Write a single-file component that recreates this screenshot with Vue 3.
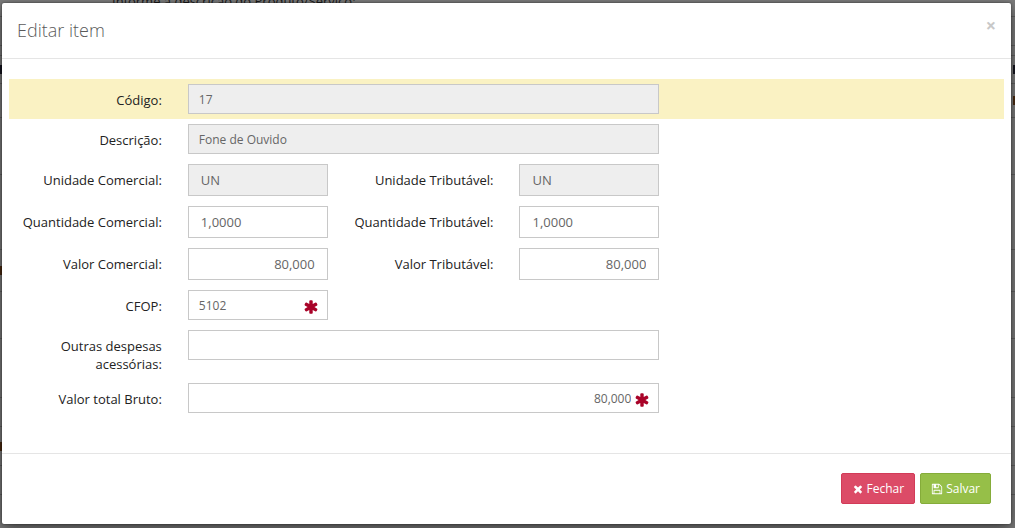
<script setup>
import { reactive } from 'vue'

const rows = reactive([
  { highlight: true, fields: [{ id: 'codigo', label: 'Código:', value: '17', readonly: true, wide: true }] },
  { fields: [{ id: 'descricao', label: 'Descrição:', value: 'Fone de Ouvido', readonly: true, wide: true }] },
  {
    fields: [
      { id: 'un-comercial', label: 'Unidade Comercial:', value: 'UN', readonly: true, large: true },
      { id: 'un-tributavel', label: 'Unidade Tributável:', value: 'UN', readonly: true, large: true },
    ],
  },
  {
    fields: [
      { id: 'qt-comercial', label: 'Quantidade Comercial:', value: '1,0000', large: true },
      { id: 'qt-tributavel', label: 'Quantidade Tributável:', value: '1,0000', large: true },
    ],
  },
  {
    fields: [
      { id: 'vl-comercial', label: 'Valor Comercial:', value: '80,000', large: true, right: true },
      { id: 'vl-tributavel', label: 'Valor Tributável:', value: '80,000', large: true, right: true },
    ],
  },
  { fields: [{ id: 'cfop', label: 'CFOP:', value: '5102', required: true }] },
  { fields: [{ id: 'despesas', label: 'Outras despesas acessórias:', value: '', wide: true, wrap: true }] },
  { fields: [{ id: 'bruto', label: 'Valor total Bruto:', value: '80,000', wide: true, right: true, required: true }] },
])

const pageRows = [
  { height: 17 },
  { height: 29 },
  { height: 10 },
  { height: 28, left: 'ink', right: 'ink' },
  { height: 34, right: 'rust' },
  { height: 57 },
  { height: 75 },
  { height: 42, left: 'rust' },
  { height: 47 },
  { height: 59 },
  { height: 29 },
  { height: 39, left: 'rust' },
  { height: 29 },
]
</script>

<template>
  <div class="screen">
    <div class="page" aria-hidden="true">
      <p class="page-label">Informe a descrição do Produto/Serviço:</p>
      <div class="page-rows">
        <div v-for="(r, i) in pageRows" :key="i" class="page-row" :style="{ height: r.height + 'px' }">
          <span class="mark" :class="r.left"></span>
          <span class="mark" :class="r.right"></span>
        </div>
      </div>
    </div>

    <section class="modal" role="dialog" aria-labelledby="modal-title">
      <header class="modal-header">
        <h1 id="modal-title">Editar item</h1>
        <button type="button" class="close" aria-label="Fechar janela">×</button>
      </header>

      <form id="item-form" class="modal-body" @submit.prevent>
        <div v-for="(row, i) in rows" :key="i" class="row" :class="{ highlight: row.highlight }">
          <template v-for="f in row.fields" :key="f.id">
            <label :for="f.id" :class="{ wrap: f.wrap }">{{ f.label }}</label>
            <div class="control" :class="{ wide: f.wide }">
              <input
                :id="f.id"
                v-model="f.value"
                type="text"
                :readonly="f.readonly"
                :required="f.required"
                :class="{ large: f.large, right: f.right, required: f.required }"
              />
              <svg v-if="f.required" class="asterisk" viewBox="0 0 1792 1792" aria-hidden="true">
                <path d="M1546 1050q46 26 59.500 77.500t-12.500 97.500l-64 110q-26 46-77.500 59.500t-97.500-12.500l-266-153v307q0 52-38 90t-90 38h-128q-52 0-90-38t-38-90v-307l-266 153q-46 26-97.500 12.500t-77.500-59.500l-64-110q-26-46-12.500-97.500t59.500-77.500l266-154-266-154q-46-26-59.500-77.500t12.500-97.500l64-110q26-46 77.500-59.500t97.500 12.500l266 153v-307q0-52 38-90t90-38h128q52 0 90 38t38 90v307l266-153q46-26 97.500-12.500t77.500 59.500l64 110q26 46 12.500 97.500t-59.500 77.500l-266 154z" />
              </svg>
            </div>
          </template>
        </div>
      </form>

      <footer class="modal-footer">
        <button type="button" class="btn danger">
          <svg viewBox="0 0 1792 1792" aria-hidden="true">
            <path d="M1490 1322q0 40-28 68l-136 136q-28 28-68 28t-68-28l-294-294-294 294q-28 28-68 28t-68-28l-136-136q-28-28-28-68t28-68l294-294-294-294q-28-28-28-68t28-68l136-136q28-28 68-28t68 28l294 294 294-294q28-28 68-28t68 28l136 136q28 28 28 68t-28 68l-294 294 294 294q28 28 28 68z" />
          </svg>
          <span>Fechar</span>
        </button>
        <button type="submit" form="item-form" class="btn success">
          <svg viewBox="0 0 1792 1792" aria-hidden="true">
            <path d="M512 1536h768v-384h-768v384zm896 0h128v-896q0-14-10-38.500t-20-34.500l-281-281q-10-10-34-20t-39-10v416q0 40-28 68t-68 28h-576q-40 0-68-28t-28-68v-416h-128v1280h128v-416q0-40 28-68t68-28h832q40 0 68 28t28 68v416zm-384-928v-320q0-13-9.500-22.500t-22.500-9.500h-192q-13 0-22.500 9.500t-9.500 22.500v320q0 13 9.500 22.500t22.500 9.500h192q13 0 22.500-9.500t9.500-22.500zm640 32v928q0 40-28 68t-68 28h-1344q-40 0-68-28t-28-68v-1344q0-40 28-68t68-28h928q40 0 88 20t76 48l280 280q28 28 48 76t20 88z" />
          </svg>
          <span>Salvar</span>
        </button>
      </footer>
    </section>
  </div>
</template>

<style>
body {
  background: #7c7c7c;
}
</style>

<style scoped>
* {
  box-sizing: border-box;
}
.screen {
  position: relative;
  min-height: 100vh;
  padding: 3px 4px 4px 2px;
  overflow: hidden;
  font-family: "Open Sans", "Noto Sans", sans-serif;
  font-size: 13px;
  line-height: 18px;
  color: #222;
}
.page {
  position: absolute;
  inset: 0;
  overflow: hidden;
  background: #7c7c7c;
}
.page-label {
  margin: -8px 0 -10px 112px;
  color: #1b1b1b;
}
.page-row {
  display: flex;
  align-items: center;
  justify-content: space-between;
  border-bottom: 1px solid #626262;
}
.mark {
  width: 2px;
  height: 9px;
}
.mark.ink {
  background: #15151f;
}
.mark.rust {
  background: #4a2a10;
}
.modal {
  position: relative;
  background: #fff;
  border-radius: 2px;
  box-shadow: 0 0 2px rgba(0, 0, 0, 0.6), 0 5px 15px rgba(0, 0, 0, 0.5);
}
.modal-header {
  display: flex;
  align-items: flex-start;
  justify-content: space-between;
  padding: 13px 15px 15px;
  border-bottom: 1px solid #e5e5e5;
}
h1 {
  margin: 2px 0 0;
  font-family: "Open Sans Light", "Open Sans", "Noto Sans", sans-serif;
  font-size: 18px;
  line-height: 25px;
  font-weight: 300;
  color: #5a5a5a;
}
.close {
  padding: 0;
  border: 0;
  background: none;
  font: 700 18px/18px "Open Sans", "Noto Sans", sans-serif;
  color: #c8c8c8;
}
.modal-body {
  padding: 20px 7px 35px;
}
.row {
  display: grid;
  grid-template-columns: repeat(6, 1fr);
  padding: 5px 0;
}
.row.highlight {
  background: #faf2c3;
}
label {
  padding: 7px 13px 0 0;
  text-align: right;
  white-space: nowrap;
}
label.wrap {
  padding-left: 13px;
  white-space: normal;
}
.control {
  position: relative;
  padding: 0 13px;
}
.control.wide {
  grid-column: span 3;
}
input {
  display: block;
  width: 100%;
  height: 30px;
  padding: 5px 10px;
  border: 1px solid #c8c8c8;
  border-radius: 0;
  background: #fff;
  font: 12px/18px "Open Sans", "Noto Sans", sans-serif;
  color: #666;
  outline: none;
  box-shadow: none;
}
input.large {
  height: 32px;
  padding: 6px 12px;
  font-size: 13px;
}
input[readonly] {
  background: #eee;
}
input.right {
  text-align: right;
}
input.required {
  padding-right: 27px;
}
.asterisk {
  position: absolute;
  top: 9px;
  right: 22px;
  width: 16px;
  height: 16px;
  fill: #a90329;
}
.modal-footer {
  display: flex;
  justify-content: flex-end;
  gap: 5px;
  padding: 19px 20px 20px;
  border-top: 1px solid #e5e5e5;
}
.btn {
  display: flex;
  align-items: center;
  gap: 3px;
  height: 31px;
  padding: 0 10px;
  border: 1px solid;
  border-radius: 2px;
  font: 12px/18px "Open Sans", "Noto Sans", sans-serif;
  color: #fff;
}
.btn svg {
  width: 12px;
  height: 12px;
  fill: currentColor;
}
.btn.danger {
  background: #dc4b67;
  border-color: #d23b58;
}
.btn.success {
  background: #96bf48;
  border-color: #85ac3a;
}
</style>
